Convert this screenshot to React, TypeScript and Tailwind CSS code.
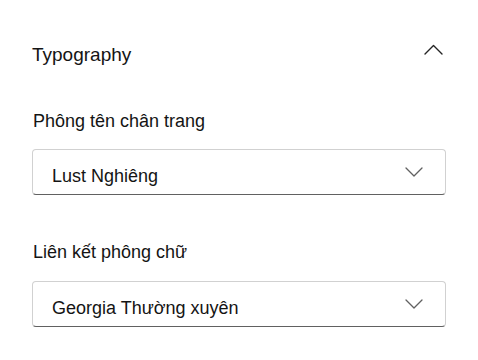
import React from "react";

function ChevronDown() {
  return (
    <svg width="18" height="10" viewBox="0 0 18 10" fill="none" className="block">
      <path d="M1 1 L9 9 L17 1" stroke="#616161" strokeWidth="1.3" strokeLinecap="round" strokeLinejoin="round" />
    </svg>
  );
}

function ChevronUp() {
  return (
    <svg width="19" height="11" viewBox="0 0 19 11" fill="none" className="block">
      <path d="M1 10 L9.5 1.5 L18 10" stroke="#242424" strokeWidth="1.4" strokeLinecap="round" strokeLinejoin="round" />
    </svg>
  );
}

function Dropdown({ value }: { value: string }) {
  return (
    <div className="h-[46px] w-full rounded-[4px] border border-[#d1d1d1] border-b-[#616161] bg-white flex items-center justify-between pl-[19px] pr-[22px]">
      <span className="pt-2 text-[18px] leading-[24px] text-[#141414]">{value}</span>
      <span className="pb-[1px]"><ChevronDown /></span>
    </div>
  );
}

export default function App() {
  return (
    <div
      className="w-[478px] h-[360px] bg-white px-8 overflow-hidden"
      style={{ fontFamily: '"Liberation Sans", Arial, sans-serif' }}
    >
      <div className="pt-[41px] flex justify-between items-start h-[69px]">
        <span className="text-[19px] leading-[28px] text-[#141414]">Typography</span>
        <span className="mt-[3px] mr-[3px]"><ChevronUp /></span>
      </div>
      <div className="mt-[40px] ml-[1px] text-[18px] leading-[24px] text-[#141414]">Phông tên chân trang</div>
      <div className="mt-[16px]">
        <Dropdown value="Lust Nghiêng" />
      </div>
      <div className="mt-[45px] ml-[1px] text-[18px] leading-[24px] text-[#141414]">Liên kết phông chữ</div>
      <div className="mt-[17px]">
        <Dropdown value="Georgia Thường xuyên" />
      </div>
    </div>
  );
}
